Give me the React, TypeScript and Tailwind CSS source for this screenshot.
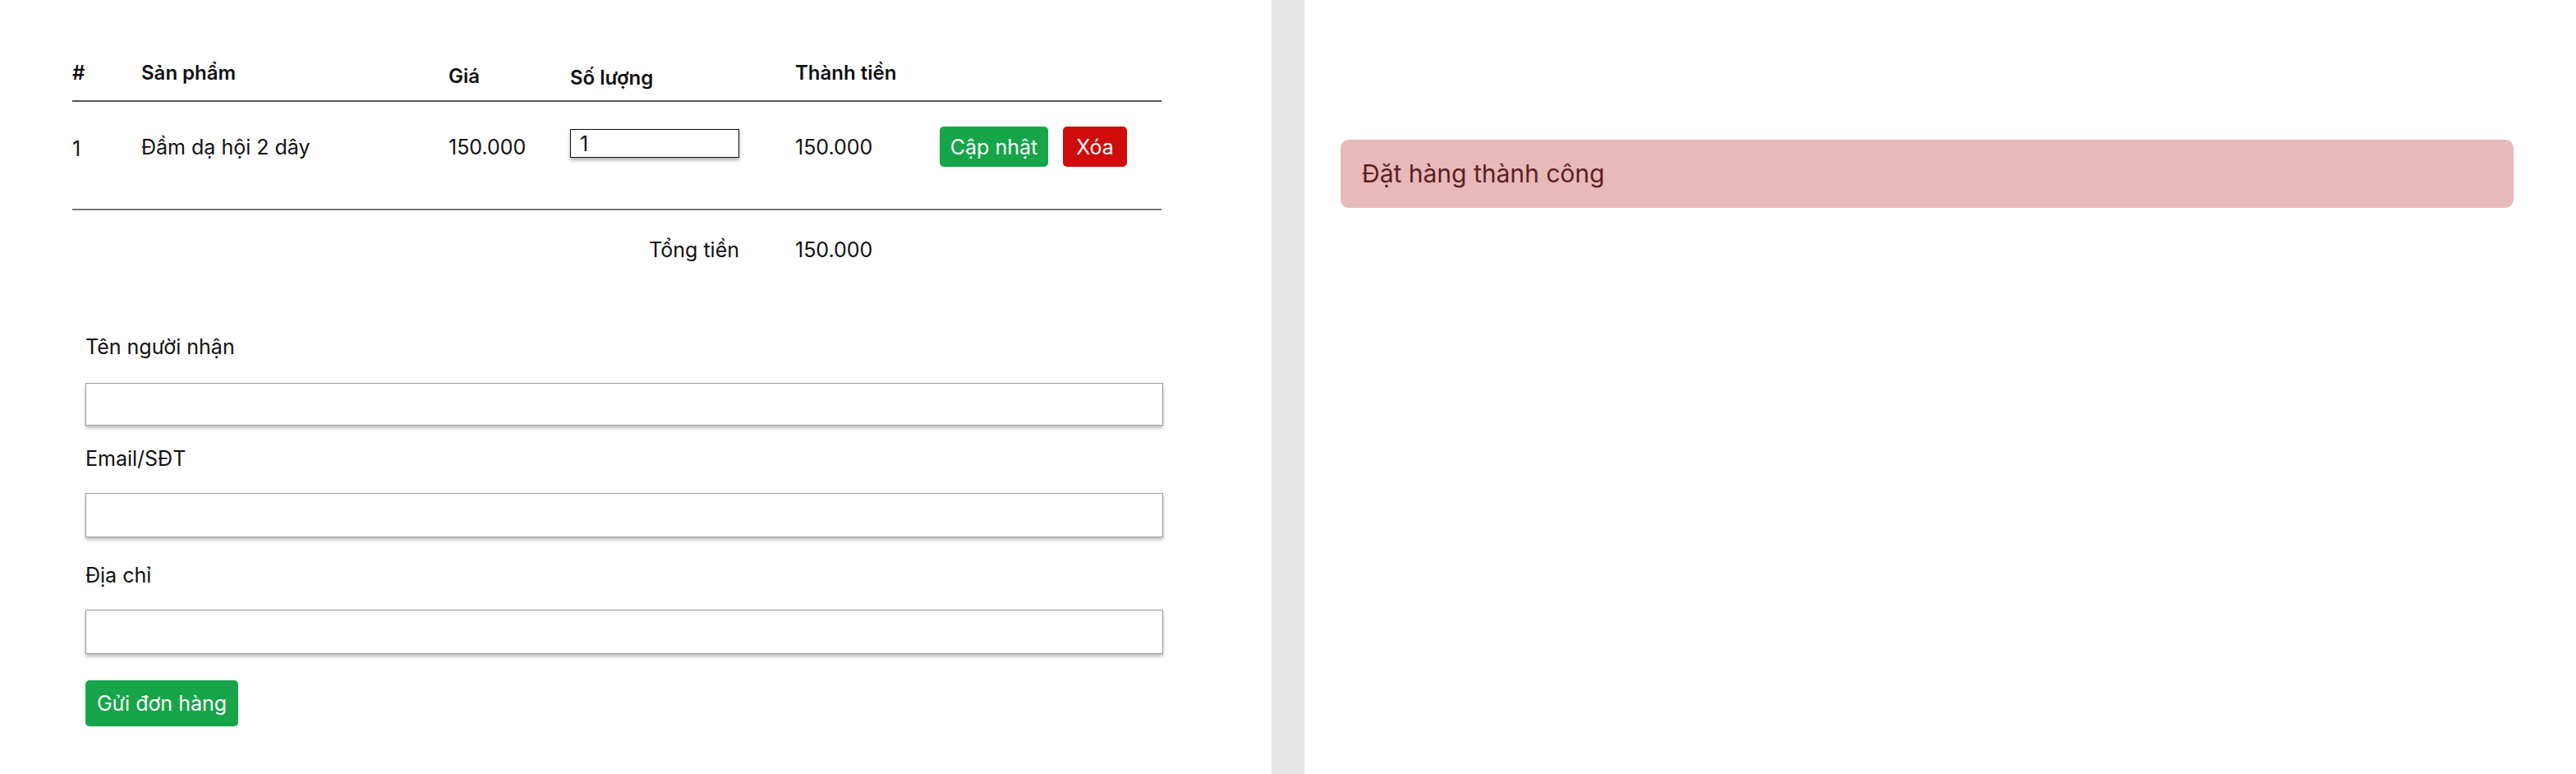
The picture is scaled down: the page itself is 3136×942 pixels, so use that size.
import React from "react";

const font = { fontFamily: "Inter, 'Noto Sans', sans-serif" };

export default function App() {
  return (
    <div className="flex w-[3136px] h-[942px] bg-white text-black" style={font}>
      {/* Left panel */}
      <div className="w-[1548px] shrink-0 pl-[88px] pt-[72px]">
        <div className="w-[1326px]">
          {/* header */}
          <div className="flex h-[52px] pt-[2px] border-b-2 border-[#555] text-[24px] font-semibold leading-[30px] text-[#111]">
            <div className="w-[84px]">#</div>
            <div className="w-[374px]">Sản phẩm</div>
            <div className="w-[148px] pt-[4px]">Giá</div>
            <div className="w-[274px] pt-[6px]">Số lượng</div>
            <div className="w-[176px]">Thành tiền</div>
          </div>
          {/* row */}
          <div className="h-[132px] pt-[30px] border-b-2 border-[#777]">
            <div className="flex items-center h-[49px] text-[25px] leading-[30px] text-[#111]">
              <div className="w-[84px] pt-[4px]">1</div>
              <div className="w-[374px]">Đầm dạ hội 2 dây</div>
              <div className="w-[148px]">150.000</div>
              <div className="w-[274px] pb-[8px]">
                <input
                  defaultValue="1"
                  className="w-[206px] h-[35px] border-[1.5px] border-[#111] bg-white px-[11px] text-[25px] leading-[30px] shadow-[0_3px_4px_rgba(0,0,0,0.3)] outline-none"
                  style={font}
                />
              </div>
              <div className="w-[176px]">150.000</div>
              <div className="flex gap-[18px]">
                <button className="w-[132px] h-[49px] rounded-[5px] bg-[#16a548] text-white text-[25px]" style={font}>
                  Cập nhật
                </button>
                <button className="w-[78px] h-[49px] rounded-[5px] bg-[#d00b0b] text-white text-[25px]" style={font}>
                  Xóa
                </button>
              </div>
            </div>
          </div>
          {/* total */}
          <div className="flex items-center h-[96px] text-[25px] leading-[30px] text-[#111]">
            <div className="w-[812px] text-right">Tổng tiền</div>
            <div className="ml-[68px]">150.000</div>
          </div>
        </div>
        {/* form */}
        <div className="ml-[16px] w-[1312px] text-[25px] leading-[30px] text-[#111]">
          <div className="mt-[55px]">Tên người nhận</div>
          <input className="block mt-[29px] w-full h-[52px] border border-[#9a9a9a] bg-white shadow-[0_3px_4px_rgba(0,0,0,0.25)] outline-none" />
          <div className="mt-[25px]">Email/SĐT</div>
          <input className="block mt-[27px] w-full h-[54px] border border-[#9a9a9a] bg-white shadow-[0_3px_4px_rgba(0,0,0,0.25)] outline-none" />
          <div className="mt-[31px]">Địa chỉ</div>
          <input className="block mt-[27px] w-full h-[54px] border border-[#9a9a9a] bg-white shadow-[0_3px_4px_rgba(0,0,0,0.25)] outline-none" />
          <button className="block mt-[32px] w-[186px] h-[56px] rounded-[5px] bg-[#16a548] text-white text-[25px]" style={font}>
            Gửi đơn hàng
          </button>
        </div>
      </div>
      {/* divider */}
      <div className="w-[40px] shrink-0 bg-[#e5e5e5]" />
      {/* right panel */}
      <div className="flex-1 pl-[44px] pr-[76px] pt-[170px]">
        <div className="flex items-center h-[83px] rounded-[10px] bg-[#e7b9ba] pl-[26px] text-[30px] text-[#5c1f1f]">
          Đặt hàng thành công
        </div>
      </div>
    </div>
  );
}
